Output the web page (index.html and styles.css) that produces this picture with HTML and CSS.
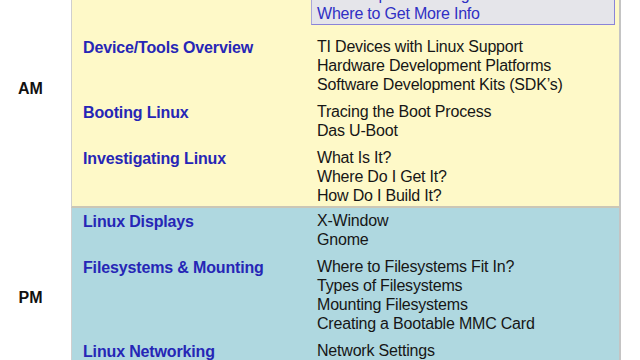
FILE: index.html
```html
<!DOCTYPE html>
<html>
<head>
<meta charset="utf-8">
<link rel="stylesheet" href="styles.css">
</head>
<body>
<div class="page">
  <section class="block">
    <div class="label label-am"><span>AM</span></div>
    <div class="panel panel-am">
      <div class="row">
        <div class="title faint">Welcome</div>
        <div class="items box">
          <div>Workshop Goals &amp; Agenda</div>
          <div>Where to Get More Info</div>
        </div>
      </div>
      <div class="row">
        <div class="title">Device/Tools Overview</div>
        <div class="items">
          <div>TI Devices with Linux Support</div>
          <div>Hardware Development Platforms</div>
          <div>Software Development Kits (SDK’s)</div>
        </div>
      </div>
      <div class="row">
        <div class="title">Booting Linux</div>
        <div class="items">
          <div>Tracing the Boot Process</div>
          <div>Das U-Boot</div>
        </div>
      </div>
      <div class="row">
        <div class="title">Investigating Linux</div>
        <div class="items">
          <div>What Is It?</div>
          <div>Where Do I Get It?</div>
          <div>How Do I Build It?</div>
        </div>
      </div>
    </div>
  </section>
  <section class="block">
    <div class="label label-pm"><span>PM</span></div>
    <div class="panel panel-pm">
      <div class="row">
        <div class="title">Linux Displays</div>
        <div class="items">
          <div>X-Window</div>
          <div>Gnome</div>
        </div>
      </div>
      <div class="row">
        <div class="title">Filesystems &amp; Mounting</div>
        <div class="items">
          <div>Where to Filesystems Fit In?</div>
          <div>Types of Filesystems</div>
          <div>Mounting Filesystems</div>
          <div>Creating a Bootable MMC Card</div>
        </div>
      </div>
      <div class="row">
        <div class="title">Linux Networking</div>
        <div class="items">
          <div>Network Settings</div>
        </div>
      </div>
    </div>
  </section>
</div>
</body>
</html>
```

FILE: styles.css
```css
html, body {
  margin: 0;
  padding: 0;
  background: #ffffff;
  overflow: hidden;
}

body {
  width: 640px;
  height: 360px;
  font-family: "Liberation Sans", Arial, sans-serif;
  font-size: 16px;
  line-height: 19px;
  color: #161616;
}

.page {
  margin-top: -20px;
  width: 621px;
}

.block {
  display: grid;
  grid-template-columns: 71px 550px;
}

.label {
  display: flex;
  align-items: center;
  justify-content: center;
  padding-right: 10px;
  font-weight: bold;
  color: #111;
}

.label-am {
  padding-bottom: 12px;
}

.panel {
  border-left: 1px solid #cfcfcf;
  border-right: 2px solid #c4c4c4;
  padding: 0 4px 0 11px;
}

.panel-am {
  background: #fef9c8;
  border-bottom: 2px solid #cbc7b6;
}

.panel-am .row:last-child {
  padding-bottom: 1px;
}

.panel-pm {
  background: #afd8e0;
  padding-bottom: 20px;
}

.row {
  display: grid;
  grid-template-columns: 234px 1fr;
  padding: 3px 0 5px;
}

.title {
  font-weight: bold;
  color: #2626b6;
  padding-top: 1px;
  letter-spacing: -0.15px;
}

.title.faint {
  color: #f3efd9;
}

.items {
  color: #161616;
  letter-spacing: -0.2px;
}

.box {
  margin: 0 0 4px -6px;
  padding: 1px 0 1px 5px;
  background: #e5e5ea;
  border: 1px solid #a9a6dc;
  border-right-color: #8a84d8;
  border-bottom-color: #8a84d8;
  color: #3030c4;
}
```
